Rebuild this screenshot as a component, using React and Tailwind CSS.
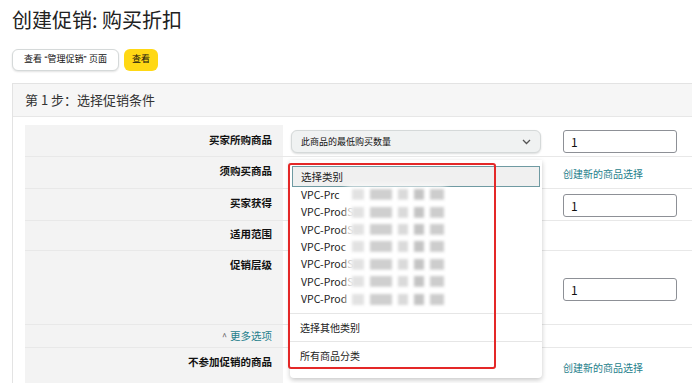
const font = { fontFamily: '"Noto Sans CJK SC", "Noto Sans", sans-serif' };
const btnFont = { fontFamily: '"Liberation Sans", "Noto Sans CJK SC", sans-serif' };

const rows = [
  { label: "买家所购商品", h: "h-[32px]", pt: "pt-[8px]", kind: "select" },
  { label: "须购买商品", h: "h-[32px]", pt: "pt-[7px]", kind: "link" },
  { label: "买家获得", h: "h-[32px]", pt: "pt-[7px]", kind: "input" },
  { label: "适用范围", h: "h-[30px]", pt: "pt-[6px]", kind: "none" },
  { label: "促销层级", h: "h-[74px]", pt: "pt-[7px]", kind: "tier" },
  { label: "更多选项", h: "h-[23px]", pt: "pt-[4px]", kind: "more" },
  { label: "不参加促销的商品", h: "h-[36px]", pt: "pt-[7px]", kind: "link2" },
];

const items = ["VPC-Prc", "VPC-ProdS", "VPC-ProdSe", "VPC-Proc", "VPC-ProdS", "VPC-ProdS", "VPC-Prod"];

function NumInput({ className = "" }) {
  return (
    <div className={`w-[114px] h-[23px] border border-[#8d9096] rounded-[3px] bg-white flex items-center pl-[7px] text-[12px] text-[#111] ${className}`}>
      1
    </div>
  );
}

function RightCell({ kind }) {
  if (kind === "select")
    return (
      <div className="flex items-start pt-[5px] pl-[8px]">
        <div className="w-[250px] h-[23px] rounded-[6px] border border-[#d5d9d9] bg-[#f0f2f2] shadow-[0_1px_2px_rgba(15,17,17,0.15)] flex items-center justify-between px-[9px]">
          <span className="text-[9px] text-[#111]">此商品的最低购买数量</span>
          <svg width="9" height="6" viewBox="0 0 9 6"><path d="M1 1l3.5 3.5L8 1" fill="none" stroke="#555" strokeWidth="1.3" /></svg>
        </div>
        <NumInput className="ml-[22px]" />
      </div>
    );
  if (kind === "input")
    return (
      <div className="pt-[5px] pl-[280px]">
        <NumInput />
      </div>
    );
  if (kind === "tier")
    return (
      <div className="pt-[27px] pl-[280px]">
        <NumInput />
      </div>
    );
  if (kind === "link" || kind === "link2")
    return (
      <div className={`${kind === "link" ? "pt-[9px]" : "pt-[12px]"} pl-[280px] text-[10px] text-[#1f7f8c]`}>创建新的商品选择</div>
    );
  return null;
}

export default function App() {
  return (
    <div className="w-[692px] h-[383px] overflow-hidden bg-white text-[#111] relative" style={font}>
      <h1 className="pl-[12px] pt-[5px] text-[20px] leading-[30px] text-[#222] font-normal">创建促销: 购买折扣</h1>
      <div className="flex gap-[5px] pl-[12px] mt-[14px]" style={btnFont}>
        <button className="h-[22px] px-[11px] rounded-[6px] border border-[#d5d9d9] bg-white text-[9px] text-[#111] shadow-[0_1px_2px_rgba(15,17,17,0.12)]">
          查看 “管理促销” 页面
        </button>
        <button className="h-[22px] px-[8px] rounded-[6px] bg-[#ffd814] text-[9px] text-[#111]">查看</button>
      </div>

      <div className="ml-[12px] mt-[12px] w-[720px] border border-[#e3e3e3]">
        <div className="h-[33px] bg-[#f6f6f6] border-b border-[#e7e7e7] pl-[12px] flex items-center text-[13px] text-[#333]">
          第 1 步：选择促销条件
        </div>
        <div className="pl-[12px] pt-[8px]">
          {rows.map((r, i) => (
            <div key={i} className={`flex ${r.h} border-b border-[#e8e8e8]`}>
              <div className={`w-[258px] shrink-0 bg-[#f3f3f3] text-right pr-[11px] ${r.pt} text-[10.5px] leading-[14px] ${r.kind === "more" ? "text-[#1f7f8c] font-normal" : "text-[#111] font-semibold"}`}>
                {r.kind === "more" && <span className="text-[#555] text-[9px] mr-[3px]">^</span>}
                {r.label}
              </div>
              <div className="flex-1 bg-white">
                <RightCell kind={r.kind} />
              </div>
            </div>
          ))}
        </div>
      </div>

      {/* dropdown list overlay */}
      <div className="absolute left-[290px] top-[160px] w-[252px] h-[218px] bg-white rounded-b-[4px] shadow-[0_2px_5px_rgba(0,0,0,0.22)] text-[10.5px] text-[#222]">
        <div className="mx-[2px] mt-[6px] h-[21px] bg-[#f0f0f0] border border-[#6f9aa2] flex items-center pl-[8px] text-[10.5px]">选择类别</div>
        <div className="-mt-[1px]">
          {items.map((t, i) => (
            <div key={i} className="h-[17.4px] flex items-center pl-[11px] relative">
              <span>{t}</span>
              <div className="absolute left-[56px] top-0 h-full w-[100px] flex items-center">
                <div className="absolute inset-0 bg-white/90 blur-[3px]" />
                <div className="relative flex items-center gap-[6px] blur-[1.5px] pl-[6px]">
                  <div className="w-[12px] h-[11px] bg-[#e2e2e2]" />
                  <div className="w-[22px] h-[11px] bg-[#cfcfcf]" />
                  <div className="w-[10px] h-[11px] bg-[#dadada]" />
                  <div className="w-[10px] h-[11px] bg-[#c4c4c4]" />
                  <div className="w-[14px] h-[11px] bg-[#cdcdcd]" />
                </div>
              </div>
            </div>
          ))}
        </div>
        <div className="border-t border-[#e6e6e6] mt-[5px] h-[28px] flex items-center pl-[10px] text-[10px]">选择其他类别</div>
        <div className="border-t border-[#e6e6e6] h-[28px] flex items-center pl-[10px] text-[10px]">所有商品分类</div>
      </div>

      {/* red annotation box */}
      <div className="absolute left-[288px] top-[163px] w-[208px] h-[206px] border-2 border-[#e42828] rounded-[3px]" />
    </div>
  );
}
